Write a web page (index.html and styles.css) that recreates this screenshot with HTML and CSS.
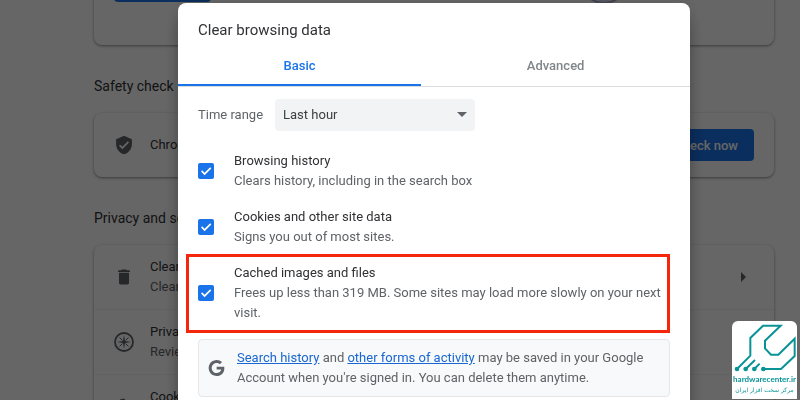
FILE: index.html
```html
<!DOCTYPE html>
<html lang="en">
<head>
  <meta charset="UTF-8">
  <meta name="viewport" content="width=device-width, initial-scale=1.0">
  <title>Settings - Clear browsing data</title>
  <link rel="stylesheet" href="styles.css">
</head>
<body>
  <!-- Settings page -->
  <main class="settings">
    <section class="card profile-card">
      <button class="primary profile-button" aria-label="Turn on sync"></button>
      <div class="avatar"></div>
    </section>

    <h2>Safety check</h2>
    <section class="card">
      <div class="row">
        <svg class="icon" viewBox="0 0 24 24"><path d="M12 1L2.500 5v6c0 5.550 4 10.740 9.500 12 5.500-1.260 9.500-6.450 9.500-12V5L12 1zm-2 16l-4-4 1.410-1.410L10 14.170l6.590-6.590L18 9l-8 8z"/></svg>
        <div class="row-text">
          <div class="label">Chrome</div>
        </div>
        <button class="primary">Check now</button>
      </div>
    </section>

    <h2>Privacy and security</h2>
    <section class="card">
      <div class="row">
        <svg class="icon" viewBox="0 0 24 24"><path d="M6 19c0 1.100.9 2 2 2h8c1.100 0 2-.9 2-2V7H6v12zM19 4h-3.500l-1-1h-5l-1 1H5v2h14V4z"/></svg>
        <div class="row-text">
          <div class="label">Clear data</div>
          <div class="sub">Clear history</div>
        </div>
        <span class="arrow"></span>
      </div>
      <div class="row">
        <svg class="icon" viewBox="0 0 20 20">
          <circle cx="10" cy="10" r="9" fill="none" stroke="currentColor" stroke-width="1.800"/>
          <path d="M10 3l1 5.600L11 9l6 1-6 1-1 6-1-6-6-1 6-1z"/>
          <path d="M5.500 5.500l3 3M14.500 5.500l-3 3M5.500 14.500l3-3M14.500 14.500l-3-3" stroke="currentColor" stroke-width="1"/>
        </svg>
        <div class="row-text">
          <div class="label">Privacy Guide</div>
          <div class="sub">Review</div>
        </div>
      </div>
      <div class="row">
        <svg class="icon" viewBox="0 0 24 24"><path d="M21.600 11.200a4 4 0 0 1-4.600-3.700 4 4 0 0 1-3.700-5.300A10 10 0 1 0 21.600 11.200zM8.500 8a1.500 1.500 0 1 1 0 3 1.500 1.500 0 0 1 0-3zm0 9a1.500 1.500 0 1 1 0-3 1.500 1.500 0 0 1 0 3zm6 0a1 1 0 1 1 0-2 1 1 0 0 1 0 2z"/></svg>
        <div class="row-text">
          <div class="label">Cookies</div>
          <div class="sub">&nbsp;</div>
        </div>
      </div>
    </section>
  </main>

  <!-- Clear browsing data dialog -->
  <div class="backdrop">
    <div class="dialog" role="dialog" aria-labelledby="dialog-title">
      <h1 id="dialog-title">Clear browsing data</h1>
      <div class="tabs">
        <button class="tab active">Basic</button>
        <button class="tab">Advanced</button>
      </div>

      <form class="dialog-body">
        <div class="time-range">
          <label for="range">Time range</label>
          <div class="select-wrap">
            <select id="range">
              <option>Last hour</option>
              <option>Last 24 hours</option>
              <option>Last 7 days</option>
              <option>All time</option>
            </select>
          </div>
        </div>

        <div class="options">
          <div class="option">
            <input type="checkbox" id="history" checked>
            <label for="history">
              <span class="label">Browsing history</span>
              <span class="sub">Clears history, including in the search box</span>
            </label>
          </div>
          <div class="option">
            <input type="checkbox" id="cookies" checked>
            <label for="cookies">
              <span class="label">Cookies and other site data</span>
              <span class="sub">Signs you out of most sites.</span>
            </label>
          </div>
          <div class="option highlight">
            <input type="checkbox" id="cache" checked>
            <label for="cache">
              <span class="label">Cached images and files</span>
              <span class="sub">Frees up less than 319 MB. Some sites may load more slowly on your next visit.</span>
            </label>
          </div>
        </div>

        <div class="notice">
          <svg class="google" viewBox="0 0 24 24"><path d="M12.240 10.285V14.400h6.806c-.275 1.765-2.056 5.174-6.806 5.174-4.095 0-7.439-3.389-7.439-7.574s3.345-7.574 7.439-7.574c2.330 0 3.891.989 4.785 1.849l3.254-3.138C18.189 1.186 15.479 0 12.240 0c-6.635 0-12 5.365-12 12s5.365 12 12 12c6.926 0 11.520-4.869 11.520-11.726 0-.788-.085-1.390-.189-1.989H12.240z"/></svg>
          <p><a href="#">Search history</a> and <a href="#">other forms of activity</a> may be saved in your Google Account when you're signed in. You can delete them anytime.</p>
        </div>
      </form>
    </div>
  </div>

  <!-- Site watermark -->
  <div class="watermark">
    <svg viewBox="0 0 195 156">
      <g fill="none" stroke="currentColor" stroke-width="6">
        <path d="M15 144L55 104V51L93 14H146L99 59V82L117 101H139L188 53V105L147 144H94"/>
        <path d="M41 144L69 117M67 144L83 128"/>
      </g>
      <g fill="currentColor">
        <circle cx="15" cy="144" r="7"/>
        <circle cx="41" cy="144" r="7"/>
        <circle cx="67" cy="144" r="7"/>
        <circle cx="94" cy="144" r="7"/>
      </g>
    </svg>
    <div class="site">hardwarecenter.ir</div>
    <div class="site-name" lang="fa" dir="rtl">مرکز سخت افزار ایران</div>
  </div>
</body>
</html>
```

FILE: styles.css
```css
* {
  box-sizing: border-box;
}

body {
  margin: 0;
  height: 100vh;
  overflow: hidden;
  font-family: Roboto, "Liberation Sans", sans-serif;
  font-size: 13px;
  line-height: 20px;
  color: #303134;
  background-color: #fff;
}

button, select {
  font-family: inherit;
  font-size: 13px;
}

/* Settings page */
.settings {
  height: 100vh;
  overflow: hidden;
  padding: 0 26px 0 94px;
}

.settings h2 {
  margin: 31px 0 17px;
  font-size: 14px;
  font-weight: 400;
}

.card {
  border-radius: 8px;
  background-color: #fff;
  box-shadow: 0 1px 2px rgba(60, 64, 67, 0.4), 0 1px 3px 1px rgba(60, 64, 67, 0.15);
}

.profile-card {
  display: flex;
  justify-content: space-between;
  align-items: flex-start;
  margin-top: -40px;
  height: 85px;
  padding: 10px 146px 0 20px;
}

.primary {
  height: 32px;
  padding: 0 16px;
  border: none;
  border-radius: 4px;
  background-color: #1a73e8;
  color: #fff;
  font-weight: 500;
}

.profile-button {
  width: 97px;
}

.avatar {
  width: 48px;
  height: 34px;
  border: 2px solid #a8a8cc;
  border-radius: 0 0 24px 24px;
  background-color: #dcdcf0;
}

.row {
  display: flex;
  align-items: center;
  gap: 16px;
  height: 64px;
  padding: 0 20px;
}

.row + .row {
  height: 65px;
  border-top: 1px solid #f1f3f4;
}

.row-text {
  flex: 1;
}

.icon {
  width: 20px;
  height: 20px;
  fill: currentColor;
  color: #5f6368;
}

.sub {
  color: #5f6368;
}

.arrow {
  margin-right: 8px;
  border: 5px solid transparent;
  border-left-color: #5f6368;
  border-right-width: 0;
}

/* Dialog */
.backdrop {
  position: fixed;
  inset: 0;
  display: flex;
  justify-content: center;
  align-items: flex-start;
  padding: 3px 26px 0 94px;
  overflow: hidden;
  background-color: rgba(0, 0, 0, 0.6);
}

.dialog {
  width: 100%;
  max-width: 512px;
  padding-bottom: 64px;
  border-radius: 8px;
  background-color: #fff;
  box-shadow: 0 0 16px rgba(0, 0, 0, 0.12), 0 16px 16px rgba(0, 0, 0, 0.24);
}

.dialog h1 {
  margin: 0;
  padding: 17px 20px 5px;
  font-size: 15px;
  font-weight: 400;
}

.tabs {
  display: flex;
  border-bottom: 1px solid #dadce0;
}

.tab {
  flex: 1 1 auto;
  height: 41px;
  padding: 2px 0 0;
  border: none;
  border-bottom: 2px solid transparent;
  background: none;
  color: #80868b;
  font-weight: 500;
}

.tab.active {
  border-bottom-color: #1a73e8;
  color: #1a73e8;
}

.dialog-body {
  padding: 12px 20px 0;
}

.time-range {
  display: flex;
  align-items: center;
  gap: 12px;
  color: #5f6368;
}

.select-wrap {
  position: relative;
}

.select-wrap::after {
  content: "";
  position: absolute;
  top: 13px;
  right: 8px;
  border: 5px solid transparent;
  border-top-color: #5f6368;
  border-bottom-width: 0;
  pointer-events: none;
}

select {
  appearance: none;
  display: block;
  width: 200px;
  height: 32px;
  padding: 0 8px 2px;
  border: none;
  border-radius: 4px;
  background-color: #f1f3f4;
  color: #3c4043;
}

.options {
  display: flex;
  flex-direction: column;
  gap: 16px;
  margin: 20px 0 16px;
}

.option {
  display: flex;
  align-items: center;
  gap: 20px;
}

.option label {
  flex: 1;
}

.option span {
  display: block;
}

.option input {
  appearance: none;
  width: 16px;
  height: 16px;
  margin: 0;
  border-radius: 2px;
  background-color: #1a73e8;
}

.option input:checked::before {
  content: "";
  display: block;
  width: 16px;
  height: 16px;
  background-color: #fff;
  clip-path: polygon(19% 53%, 26% 46%, 41% 61%, 76% 27%, 83% 34%, 41% 76%);
}

.highlight {
  position: relative;
}

.highlight::after {
  content: "";
  position: absolute;
  inset: -9px 0 -10px -12px;
  border: 3px solid #f4260c;
  pointer-events: none;
}

.notice {
  display: flex;
  align-items: center;
  gap: 12px;
  padding: 8px 9px;
  border: 1px solid #e4e6e9;
  border-radius: 4px;
  background-color: #f8f9fa;
  color: #5f6368;
}

.notice p {
  flex: 1;
  margin: 0;
}

.notice a {
  color: #1967d2;
}

.google {
  width: 17px;
  height: 16px;
  fill: currentColor;
}

/* Watermark */
.watermark {
  position: fixed;
  right: 3px;
  bottom: 1px;
  width: 65px;
  height: 78px;
  border-radius: 6px 6px 0 0;
  background-color: #fff;
  color: #0a9396;
  text-align: center;
  white-space: nowrap;
}

.watermark svg {
  display: block;
  width: 65px;
  height: 52px;
}

.site {
  font-family: Lato, sans-serif;
  font-size: 8px;
  font-weight: 700;
  line-height: 12px;
}

.site-name {
  font-family: "DejaVu Sans", sans-serif;
  font-size: 6px;
  line-height: 10px;
}
```
